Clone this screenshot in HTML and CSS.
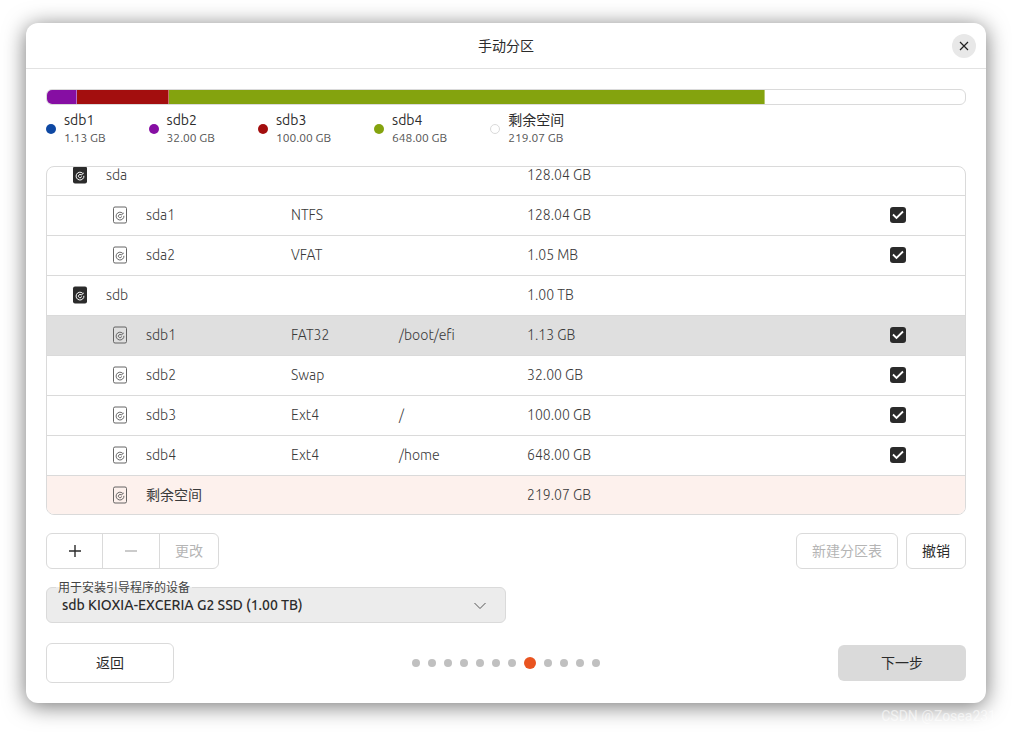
FILE: index.html
```html
<!DOCTYPE html>
<html lang="zh-CN">
<head>
  <meta charset="UTF-8">
  <meta name="viewport" content="width=device-width, initial-scale=1.0">
  <title>手动分区</title>
  <link rel="stylesheet" href="styles.css">
</head>
<body>
  <svg class="sprite" aria-hidden="true">
    <symbol id="disk" viewBox="0 0 16 18">
      <g fill="none" stroke="#555" stroke-width="0.9">
        <rect x="1.5" y="1" width="13" height="16" rx="1.5"/>
        <path d="M10.6 7.2A3.9 3.9 0 1 0 11.9 9.8"/>
        <path d="M11.8 7L9.2 9A1.6 1.6 0 1 0 9.6 10.4"/>
      </g>
    </symbol>
    <symbol id="disk-filled" viewBox="0 0 16 18">
      <rect x="1" y="0.5" width="14" height="17" rx="2" fill="#2b2b2b"/>
      <g fill="none" stroke="#fff">
        <path d="M10.6 7.2A3.9 3.9 0 1 0 11.9 9.8"/>
        <path d="M11.8 7L9.2 9A1.6 1.6 0 1 0 9.6 10.4"/>
      </g>
    </symbol>
  </svg>

  <div class="window">
    <header class="titlebar">
      <h1>手动分区</h1>
      <button class="close" aria-label="关闭">
        <svg width="10" height="10" viewBox="0 0 10 10"><path d="M1 1l8 8M9 1l-8 8" stroke="#222" stroke-width="1.2"/></svg>
      </button>
    </header>

    <main class="content">
      <div class="bar">
        <span class="sdb2" style="width: 3.3%"></span>
        <span class="sdb3" style="width: 10%"></span>
        <span class="sdb4" style="width: 64.9%"></span>
      </div>

      <ul class="legend">
        <li><i class="dot sdb1"></i><div>sdb1<small>1.13 GB</small></div></li>
        <li><i class="dot sdb2"></i><div>sdb2<small>32.00 GB</small></div></li>
        <li><i class="dot sdb3"></i><div>sdb3<small>100.00 GB</small></div></li>
        <li><i class="dot sdb4"></i><div>sdb4<small>648.00 GB</small></div></li>
        <li><i class="dot free"></i><div>剩余空间<small>219.07 GB</small></div></li>
      </ul>

      <div class="list">
        <table>
          <colgroup>
            <col class="col-name"><col class="col-fs"><col class="col-mount"><col><col class="col-check">
          </colgroup>
          <tbody>
            <tr class="device">
              <td><div class="name"><svg><use href="#disk-filled"/></svg>sda</div></td>
              <td></td><td></td><td>128.04 GB</td><td></td>
            </tr>
            <tr>
              <td><div class="name"><svg><use href="#disk"/></svg>sda1</div></td>
              <td>NTFS</td><td></td><td>128.04 GB</td>
              <td><input type="checkbox" aria-label="sda1" checked></td>
            </tr>
            <tr>
              <td><div class="name"><svg><use href="#disk"/></svg>sda2</div></td>
              <td>VFAT</td><td></td><td>1.05 MB</td>
              <td><input type="checkbox" aria-label="sda2" checked></td>
            </tr>
            <tr class="device">
              <td><div class="name"><svg><use href="#disk-filled"/></svg>sdb</div></td>
              <td></td><td></td><td>1.00 TB</td><td></td>
            </tr>
            <tr class="selected">
              <td><div class="name"><svg><use href="#disk"/></svg>sdb1</div></td>
              <td>FAT32</td><td>/boot/efi</td><td>1.13 GB</td>
              <td><input type="checkbox" aria-label="sdb1" checked></td>
            </tr>
            <tr>
              <td><div class="name"><svg><use href="#disk"/></svg>sdb2</div></td>
              <td>Swap</td><td></td><td>32.00 GB</td>
              <td><input type="checkbox" aria-label="sdb2" checked></td>
            </tr>
            <tr>
              <td><div class="name"><svg><use href="#disk"/></svg>sdb3</div></td>
              <td>Ext4</td><td>/</td><td>100.00 GB</td>
              <td><input type="checkbox" aria-label="sdb3" checked></td>
            </tr>
            <tr>
              <td><div class="name"><svg><use href="#disk"/></svg>sdb4</div></td>
              <td>Ext4</td><td>/home</td><td>648.00 GB</td>
              <td><input type="checkbox" aria-label="sdb4" checked></td>
            </tr>
            <tr class="unused">
              <td><div class="name"><svg><use href="#disk"/></svg><b>剩余空间</b></div></td>
              <td></td><td></td><td>219.07 GB</td><td></td>
            </tr>
          </tbody>
        </table>
      </div>

      <div class="toolbar">
        <div class="group">
          <button aria-label="添加"><svg width="12" height="12" viewBox="0 0 12 12"><path d="M0 6h12M6 0v12" stroke="#2b2b2b" stroke-width="1.4"/></svg></button>
          <button aria-label="删除" disabled><svg width="12" height="12" viewBox="0 0 12 12"><path d="M0 6h12" stroke="#b5b5b5" stroke-width="1.4"/></svg></button>
          <button disabled>更改</button>
        </div>
        <button class="btn" disabled>新建分区表</button>
        <button class="btn">撤销</button>
      </div>

      <div class="field">
        <label for="boot-device">用于安装引导程序的设备</label>
        <select id="boot-device">
          <option>sdb KIOXIA-EXCERIA G2 SSD (1.00 TB)</option>
        </select>
        <svg class="chevron" width="12" height="8" viewBox="0 0 12 8"><path d="M0.5 1L6 6.5L11.5 1" fill="none" stroke="#555"/></svg>
      </div>

      <footer class="footer">
        <button class="btn back">返回</button>
        <div class="steps">
          <i></i><i></i><i></i><i></i><i></i><i></i><i></i><i class="active"></i><i></i><i></i><i></i><i></i>
        </div>
        <button class="btn next">下一步</button>
      </footer>
    </main>
  </div>
  <div class="watermark">CSDN @Zosea231</div>
</body>
</html>
```

FILE: styles.css
```css
* {
  box-sizing: border-box;
}
body {
  margin: 0;
  padding: 23px 26px 29px;
  background: #fff;
  color: #2b2b2b;
  font-family: Ubuntu, "Noto Sans", "Noto Sans CJK SC", sans-serif;
  font-size: 14px;
  line-height: 20px;
  overflow: hidden;
}
button, select {
  font: inherit;
  color: inherit;
}
.sprite {
  display: none;
}
.window {
  background: #fff;
  border-radius: 12px;
  box-shadow: 0 3px 22px rgba(0, 0, 0, 0.55);
}

/* title bar */
.titlebar {
  position: relative;
  display: flex;
  align-items: center;
  justify-content: center;
  height: 46px;
  border-bottom: 1px solid #e2e2e2;
}
.titlebar h1 {
  margin: 0;
  font-size: 14px;
  font-weight: 400;
}
.close {
  position: absolute;
  right: 10px;
  display: flex;
  align-items: center;
  justify-content: center;
  width: 24px;
  height: 24px;
  padding: 0;
  border: none;
  border-radius: 50%;
  background: #e8e8e8;
}

.content {
  padding: 20px;
}

/* disk usage */
.bar {
  display: flex;
  height: 16px;
  border: 1px solid #dadada;
  border-radius: 6px;
  overflow: hidden;
}
.bar span {
  border-right: 1px solid rgba(255, 255, 255, 0.4);
}
.sdb1 { background-color: #0e48a3; }
.sdb2 { background-color: #860ea3; }
.sdb3 { background-color: #a30e0e; }
.sdb4 { background-color: #84a30e; }
.free { border: 1px solid #dadada; }

.legend {
  display: flex;
  gap: 43px;
  margin: 6px 0 19px;
  padding: 0;
  list-style: none;
}
.legend li {
  display: flex;
  align-items: center;
  gap: 8px;
  line-height: 18px;
}
.legend small {
  display: block;
  font-size: 12px;
  color: #555;
}
.dot {
  width: 10px;
  height: 10px;
  border-radius: 50%;
}

/* partition list, scrolled to its end */
.list {
  display: flex;
  align-items: flex-end;
  height: 349px;
  border: 1px solid #dadada;
  border-radius: 8px;
  overflow: hidden;
}
table {
  width: 100%;
  table-layout: fixed;
  border-collapse: separate;
  border-spacing: 0;
}
.col-name { width: 244px; }
.col-fs { width: 108px; }
.col-mount { width: 128px; }
.col-check { width: 75px; }
td {
  height: 40px;
  padding: 0 0 1px;
  border-bottom: 1px solid #dadada;
  color: #3a3a3a;
  font-weight: 300;
}
tr:last-child td {
  height: 38px;
  padding: 0;
  border-bottom: none;
}
.name {
  display: flex;
  align-items: center;
  gap: 18px;
  padding-left: 65px;
}
.device .name {
  padding-left: 25px;
}
.name svg {
  width: 16px;
  height: 18px;
}
.name b {
  font-weight: 400;
}
.selected td {
  background: #dfdfdf;
}
.unused td {
  background: #fdf1ed;
}
input[type="checkbox"] {
  appearance: none;
  display: block;
  width: 16px;
  height: 16px;
  margin: 0;
  border-radius: 3px;
  background: #2b2b2b url("data:image/svg+xml,%3Csvg xmlns='http://www.w3.org/2000/svg' viewBox='0 0 16 16'%3E%3Cpath d='M3 7.5L6.5 11L13 4.5' fill='none' stroke='white' stroke-width='1.8'/%3E%3C/svg%3E");
}

/* buttons */
.toolbar {
  display: flex;
  gap: 8px;
  margin: 18px 0;
}
.group {
  display: flex;
  height: 36px;
  margin-right: auto;
  border: 1px solid #dadada;
  border-radius: 6px;
}
.group button {
  display: flex;
  align-items: center;
  justify-content: center;
  min-width: 55px;
  padding: 0 15px;
  border: none;
  background: none;
}
.group button + button {
  min-width: 57px;
  border-left: 1px solid #dadada;
}
.btn {
  height: 36px;
  padding: 0 15px;
  border: 1px solid #dadada;
  border-radius: 6px;
  background: #fff;
}
button:disabled {
  color: #b5b5b5;
}

/* boot loader device */
.field {
  position: relative;
  width: 50%;
  margin-bottom: 20px;
}
.field label {
  position: absolute;
  top: -7px;
  left: 10px;
  padding: 0 2px;
  font-size: 12px;
  line-height: 16px;
  color: #444;
  background: linear-gradient(#fff 7px, #ececec 7px);
}
.field select {
  appearance: none;
  display: block;
  width: 100%;
  height: 36px;
  padding: 0 40px 0 15px;
  border: 1px solid #dadada;
  border-radius: 6px;
  background: #ececec;
  font-weight: 500;
}
.chevron {
  position: absolute;
  top: 15px;
  right: 20px;
  pointer-events: none;
}

.footer {
  display: flex;
  align-items: center;
  justify-content: space-between;
}
.back, .next {
  width: 128px;
}
.back {
  height: 40px;
}
.next {
  border: none;
  background: #dadada;
}
.steps {
  display: flex;
  align-items: center;
  gap: 8px;
}
.steps i {
  width: 8px;
  height: 8px;
  border-radius: 50%;
  background: #c0c0c0;
}
.steps .active {
  width: 12px;
  height: 12px;
  background: #e95420;
}

.watermark {
  position: absolute;
  right: 16px;
  bottom: 6px;
  font-family: Roboto, sans-serif;
  color: rgba(255, 255, 255, 0.6);
}
```
